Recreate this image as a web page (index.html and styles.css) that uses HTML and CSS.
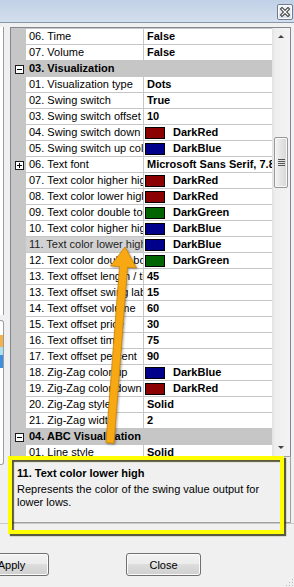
FILE: index.html
```html
<!DOCTYPE html>
<html>
<head>
<meta charset="utf-8">
<title>Property grid</title>
<link rel="stylesheet" href="styles.css">
</head>
<body>
<div class="window">
  <div class="titlebar">
    <div class="close-btn">
      <svg width="14" height="14" viewBox="0 0 14 14"><path d="M4 4 L10 10 M10 4 L4 10" stroke="#3b3b3b" stroke-width="3.2" stroke-linecap="square"/><path d="M4 4 L10 10 M10 4 L4 10" stroke="#ffffff" stroke-width="1.2" stroke-linecap="square"/></svg>
    </div>
  </div>
  <div class="main">
    <div class="side">
      <div class="side-panel p1"></div>
      <div class="side-panel p2">
        <div class="chip orange"></div>
        <div class="chip cyan"></div>
        <div class="chip blue"></div>
      </div>
    </div>
    <div class="content">
      <div class="grid">
        <div class="rows">
          <div class="row"><div class="mg"></div><div class="name">06. Time</div><div class="val">False</div></div>
          <div class="row"><div class="mg"></div><div class="name">07. Volume</div><div class="val">False</div></div>
          <div class="row cat"><div class="mg"><span class="box minus"></span></div><div class="name">03. Visualization</div></div>
          <div class="row"><div class="mg"></div><div class="name">01. Visualization type</div><div class="val">Dots</div></div>
          <div class="row"><div class="mg"></div><div class="name">02. Swing switch</div><div class="val">True</div></div>
          <div class="row"><div class="mg"></div><div class="name">03. Swing switch offset</div><div class="val">10</div></div>
          <div class="row"><div class="mg"></div><div class="name">04. Swing switch down color</div><div class="val"><span class="sw red"></span>DarkRed</div></div>
          <div class="row"><div class="mg"></div><div class="name">05. Swing switch up color</div><div class="val"><span class="sw blue"></span>DarkBlue</div></div>
          <div class="row"><div class="mg"><span class="box plus"></span></div><div class="name">06. Text font</div><div class="val">Microsoft Sans Serif, 7.8pt</div></div>
          <div class="row"><div class="mg"></div><div class="name">07. Text color higher high</div><div class="val"><span class="sw red"></span>DarkRed</div></div>
          <div class="row"><div class="mg"></div><div class="name">08. Text color lower high</div><div class="val"><span class="sw red"></span>DarkRed</div></div>
          <div class="row"><div class="mg"></div><div class="name">09. Text color double top</div><div class="val"><span class="sw green"></span>DarkGreen</div></div>
          <div class="row"><div class="mg"></div><div class="name">10. Text color higher high</div><div class="val"><span class="sw blue"></span>DarkBlue</div></div>
          <div class="row selected"><div class="mg"></div><div class="name">11. Text color lower high</div><div class="val"><span class="sw blue"></span>DarkBlue</div></div>
          <div class="row"><div class="mg"></div><div class="name">12. Text color double bottom</div><div class="val"><span class="sw green"></span>DarkGreen</div></div>
          <div class="row"><div class="mg"></div><div class="name">13. Text offset length / time</div><div class="val">45</div></div>
          <div class="row"><div class="mg"></div><div class="name">13. Text offset swing labels</div><div class="val">15</div></div>
          <div class="row"><div class="mg"></div><div class="name">14. Text offset volume</div><div class="val">60</div></div>
          <div class="row"><div class="mg"></div><div class="name">15. Text offset price</div><div class="val">30</div></div>
          <div class="row"><div class="mg"></div><div class="name">16. Text offset time</div><div class="val">75</div></div>
          <div class="row"><div class="mg"></div><div class="name">17. Text offset percent</div><div class="val">90</div></div>
          <div class="row"><div class="mg"></div><div class="name">18. Zig-Zag color up</div><div class="val"><span class="sw blue"></span>DarkBlue</div></div>
          <div class="row"><div class="mg"></div><div class="name">19. Zig-Zag color down</div><div class="val"><span class="sw red"></span>DarkRed</div></div>
          <div class="row"><div class="mg"></div><div class="name">20. Zig-Zag style</div><div class="val">Solid</div></div>
          <div class="row"><div class="mg"></div><div class="name">21. Zig-Zag width</div><div class="val">2</div></div>
          <div class="row cat"><div class="mg"><span class="box minus"></span></div><div class="name">04. ABC Visualization</div></div>
          <div class="row"><div class="mg"></div><div class="name">01. Line style</div><div class="val">Solid</div></div>
        </div>
        <div class="scrollbar">
          <div class="sb-btn"><span class="tri up"></span></div>
          <div class="thumb"><span class="grip-lines"></span></div>
          <div class="sb-fill"></div>
          <div class="sb-btn"><span class="tri down"></span></div>
        </div>
      </div>
      <div class="help">
        <div class="help-title">11. Text color lower high</div>
        <div class="help-desc">Represents the color of the swing value output for lower lows.</div>
      </div>
    </div>
  </div>
  <div class="sep"></div>
  <div class="buttons">
    <button class="btn">Apply</button>
    <button class="btn">Close</button>
  </div>
  <svg class="size-grip" width="9" height="9" viewBox="0 0 9 9">
    <rect x="7" y="1" width="1" height="1" fill="#b8b8b8"/>
    <rect x="4" y="4" width="1" height="1" fill="#b8b8b8"/>
    <rect x="7" y="4" width="1" height="1" fill="#b8b8b8"/>
    <rect x="1" y="7" width="1" height="1" fill="#b8b8b8"/>
    <rect x="4" y="7" width="1" height="1" fill="#b8b8b8"/>
    <rect x="7" y="7" width="1" height="1" fill="#b8b8b8"/>
  </svg>
</div>
<div class="highlight"></div>
<svg class="arrow" width="294" height="587" viewBox="0 0 294 587">
  <polygon points="125,247 136.5,267.9 127.5,267.2 114,443.3 106,442.7 119.5,266.6 110.5,265.9" fill="#f7a812" stroke="#c98300" stroke-width="0.8" stroke-linejoin="round"/>
</svg>
</body>
</html>
```

FILE: styles.css
```css
* { box-sizing: border-box; }

html, body {
  margin: 0;
  padding: 0;
}

body {
  width: 294px;
  height: 587px;
  overflow: hidden;
  position: relative;
  background: #f0f0f0;
  font-family: "Liberation Sans", Arial, sans-serif;
  font-size: 11px;
  color: #000;
}

.window {
  width: 294px;
  height: 587px;
  position: relative;
}

/* title bar */
.titlebar {
  height: 23px;
  background: linear-gradient(#c0d0e6, #d4dfee);
  border-bottom: 1px solid #8797ae;
  display: flex;
  justify-content: flex-end;
  align-items: flex-start;
  padding: 4px 1px 0 0;
}

.close-btn {
  width: 16px;
  height: 16px;
  border: 1px solid #6f7c90;
  border-radius: 2px;
  background: linear-gradient(#f4f6f9, #d8e0eb);
  box-shadow: inset 0 0 0 1px #fbfcfd;
  display: flex;
  align-items: center;
  justify-content: center;
}

/* main */
.main {
  margin-top: 4px;
  height: 496px;
  display: flex;
}

.side {
  width: 10px;
  display: flex;
  flex-direction: column;
}

.side-panel {
  width: 4px;
  background: #fff;
  border-right: 1px solid #9c9c9c;
}

.p1 { height: 288px; }

.p2 {
  margin-top: 5px;
  height: 145px;
  border-top: 1px solid #9c9c9c;
  border-bottom: 1px solid #9c9c9c;
  border-radius: 0 3px 3px 0;
  padding-top: 14px;
}

.chip { width: 3px; }
.chip.orange { height: 12px; background: #f5b24a; }
.chip.cyan { height: 8px; background: #a9e3f3; }
.chip.blue { height: 13px; background: #3d8fe0; }

.content {
  width: 281px;
  display: flex;
  flex-direction: column;
}

/* property grid */
.grid {
  height: 429px;
  border: 1px solid #828790;
  border-bottom: none;
  display: flex;
}

.rows {
  width: 261px;
  overflow: hidden;
  background: #c6c6c6;
  padding-top: 1px;
}

.row {
  display: grid;
  grid-template-columns: 15px 118px 128px;
  height: 16px;
}

.mg {
  display: flex;
  align-items: center;
  padding-left: 4px;
}

.name {
  background: #fff;
  border-right: 1px solid #c6c6c6;
  border-bottom: 1px solid #c6c6c6;
  padding-left: 3px;
  line-height: 15px;
  white-space: nowrap;
  overflow: hidden;
}

.val {
  background: #fff;
  border-bottom: 1px solid #c6c6c6;
  padding-left: 3px;
  line-height: 15px;
  font-weight: bold;
  white-space: nowrap;
  overflow: hidden;
  display: flex;
  align-items: center;
}

.row.cat .name {
  grid-column: 2 / span 2;
  background: transparent;
  border: none;
  font-weight: bold;
}

.row.selected .name {
  background: #d2d2d2;
  color: #1e1e1e;
}

.box {
  width: 9px;
  height: 9px;
  border: 1px solid #1a1a1a;
  background: #fff;
  position: relative;
}

.box::before {
  content: "";
  position: absolute;
  left: 1px;
  top: 3px;
  width: 5px;
  height: 1px;
  background: #000;
}

.box.plus::after {
  content: "";
  position: absolute;
  left: 3px;
  top: 1px;
  width: 1px;
  height: 5px;
  background: #000;
}

.sw {
  width: 20px;
  height: 12px;
  border: 1px solid #000;
  margin-left: -2px;
  margin-right: 8px;
  flex: none;
}
.sw.red { background: #8b0000; }
.sw.blue { background: #00008b; }
.sw.green { background: #006400; }

/* scrollbar */
.scrollbar {
  width: 18px;
  background: linear-gradient(to right, #e2e2e2, #eeeeee 3px, #f3f3f3);
  display: flex;
  flex-direction: column;
  align-items: center;
}

.sb-btn {
  height: 17px;
  width: 100%;
  display: flex;
  align-items: center;
  justify-content: center;
}

.tri {
  width: 0;
  height: 0;
  border-left: 3px solid transparent;
  border-right: 3px solid transparent;
}
.tri.up { border-bottom: 3px solid #404040; }
.tri.down { border-top: 3px solid #404040; }

.thumb {
  margin-top: 92px;
  width: 14px;
  height: 51px;
  border: 1px solid #979797;
  border-radius: 2px;
  background: linear-gradient(to right, #f2f2f2, #e4e4e4 50%, #d6d6d6);
  box-shadow: inset 0 0 0 1px #f8f8f8;
  display: flex;
  align-items: center;
  justify-content: center;
}

.grip-lines {
  width: 7px;
  height: 7px;
  background: repeating-linear-gradient(#555 0 1px, transparent 1px 2px);
}

.sb-fill { flex: 1; }

/* help panel */
.help {
  height: 67px;
  border: 1px solid #a0a0a0;
  padding: 10px 6px 0 6px;
  background: #f0f0f0;
}

.help-title {
  font-weight: bold;
  line-height: 13px;
}

.help-desc {
  margin-top: 3px;
  line-height: 13px;
  color: #000;
}

.sep {
  height: 1px;
  background: #c9c9c9;
}

/* buttons */
.buttons {
  display: flex;
  gap: 77px;
  padding-top: 29px;
  margin-left: -26px;
}

.btn {
  width: 75px;
  height: 23px;
  margin: 0;
  padding: 0;
  border: 1px solid #707070;
  border-radius: 3px;
  background: linear-gradient(#f2f2f2 0%, #ebebeb 50%, #dddddd 50%, #cfcfcf 100%);
  box-shadow: inset 0 0 0 1px #fbfbfb;
  font-family: "Liberation Sans", Arial, sans-serif;
  font-size: 11px;
  color: #000;
}

.size-grip {
  position: absolute;
  right: 0;
  bottom: 0;
}

/* annotation overlays */
.highlight {
  position: absolute;
  left: 8px;
  top: 456px;
  width: 276px;
  height: 78px;
  border: 4px solid #ffff00;
  box-shadow: 2px 2px 1px rgba(40, 40, 0, 0.75), inset 2px 2px 1px rgba(40, 40, 0, 0.75);
}

.arrow {
  position: absolute;
  left: 0;
  top: 0;
  pointer-events: none;
  filter: drop-shadow(1px 1px 1px rgba(0, 0, 0, 0.35));
}
```
